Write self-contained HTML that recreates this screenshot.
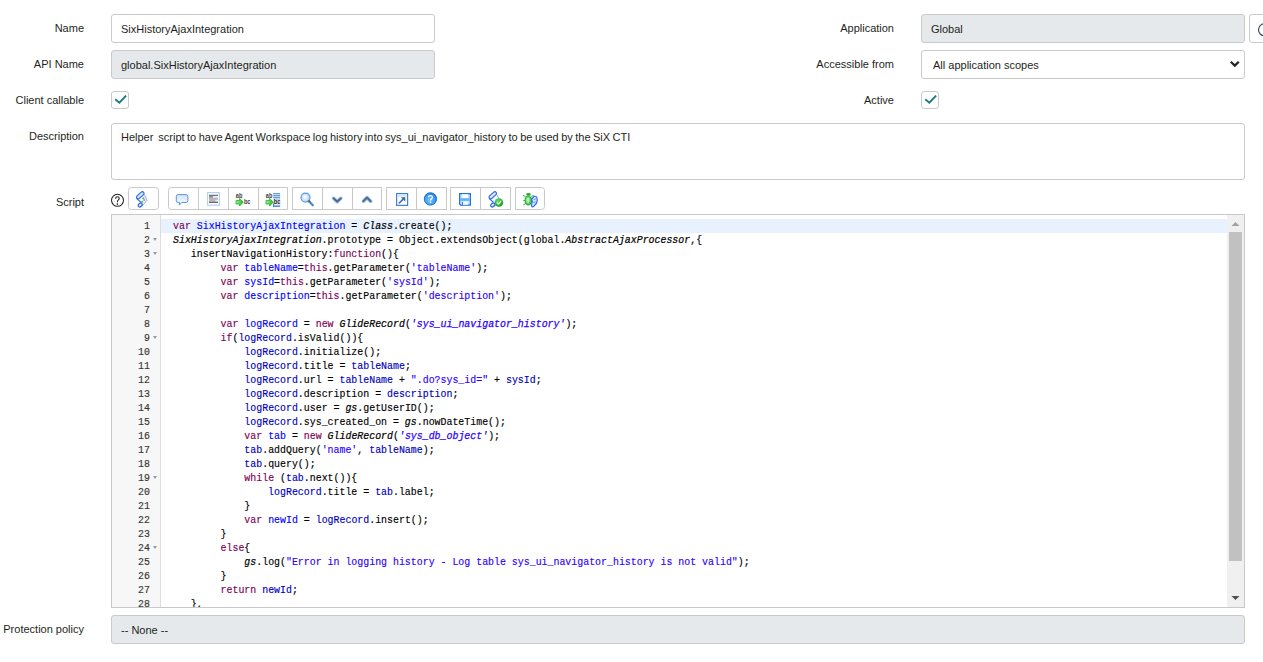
<!DOCTYPE html>
<html><head><meta charset="utf-8">
<style>
*{box-sizing:border-box;margin:0;padding:0}
html,body{width:1263px;height:662px;overflow:hidden;background:#fff}
body{position:relative;font-family:"Liberation Sans",sans-serif;font-size:11px;color:#1d1f21}
.lbl{position:absolute;right:auto;text-align:right;white-space:nowrap;line-height:14px}
.inp{position:absolute;border:1px solid #c9cacb;border-radius:3px;background:#fff;height:29px;padding-left:9px;padding-top:1px;line-height:27px;white-space:nowrap;overflow:hidden}
.ro{background:#e6e9eb}
.cb{position:absolute;width:18px;height:18px;border:1px solid #c9cacb;border-radius:3px;background:#fff}
.cb svg{position:absolute;left:-1px;top:-1px}

.ed{position:absolute;left:111px;top:214px;width:1134px;height:394px;border:1px solid #c9c9c9;overflow:hidden;background:#fff}
.gut{position:absolute;left:0;top:0;width:49px;height:100%;background:#f7f7f7;border-right:1px solid #ddd}
.code{position:absolute;left:0;top:4px;width:100%;font-family:"Liberation Mono",monospace;font-size:10.9px;line-height:14px;white-space:pre;color:#000;-webkit-text-stroke:0.15px currentColor}
.ln{position:relative;height:14px}
.ln .n{position:absolute;left:0;width:38px;text-align:right;color:#333;transform:scaleX(0.9096);transform-origin:right center}
.ln .t{position:absolute;left:61px;transform:scaleX(0.9096);transform-origin:left center}
.ln.hl .bg{position:absolute;left:49px;right:17px;top:0;height:14px;background:#e8f2fe}
.fold{position:absolute;left:41px;top:5px;width:0;height:0;border-left:2.5px solid transparent;border-right:2.5px solid transparent;border-top:3px solid #999}
.k{color:#7f0055}.d{color:#0000ff}.v{color:#0000c0}.s{color:#2a00ff}.g{font-style:italic;-webkit-text-stroke:0.22px currentColor}.si{font-style:italic;-webkit-text-stroke:0.25px currentColor}
.sb{position:absolute;right:0;top:0;width:17px;height:100%;background:#f0f0f0}
</style></head><body>

<div class="lbl" style="left:0;width:84px;top:21px">Name</div>
<div class="inp" style="left:111px;top:14px;width:324px">SixHistoryAjaxIntegration</div>

<div class="lbl" style="left:0;width:84px;top:57px">API Name</div>
<div class="inp ro" style="left:111px;top:50px;width:324px">global.SixHistoryAjaxIntegration</div>

<div class="lbl" style="left:0;width:84px;top:93px">Client callable</div>
<div class="cb" style="left:111px;top:91px"><svg width="18" height="18" viewBox="0 0 18 18"><path d="M4.2 8.3 L8.4 11.7 L15.1 4.6" fill="none" stroke="#1f7d7d" stroke-width="2"/></svg></div>

<div class="lbl" style="left:810px;width:84px;top:21px">Application</div>
<div class="inp ro" style="left:921px;top:14px;width:324px">Global</div>
<div class="inp" style="left:1249px;top:14px;width:30px"></div>
<svg style="position:absolute;left:1250px;top:15px" width="13" height="26"><circle cx="14.5" cy="14.8" r="6" fill="none" stroke="#3a4a5c" stroke-width="1.2"/></svg>

<div class="lbl" style="left:810px;width:84px;top:57px">Accessible from</div>
<div class="inp" style="left:921px;top:50px;width:324px;padding-left:11px">All application scopes</div>
<svg style="position:absolute;left:1225px;top:55px" width="20" height="18"><path d="M5.8 6.7 L9.8 10.6 L13.8 6.7" fill="none" stroke="#222" stroke-width="2.2"/></svg>

<div class="lbl" style="left:810px;width:84px;top:93px">Active</div>
<div class="cb" style="left:921px;top:91px"><svg width="18" height="18" viewBox="0 0 18 18"><path d="M4.2 8.3 L8.4 11.7 L15.1 4.6" fill="none" stroke="#1f7d7d" stroke-width="2"/></svg></div>

<div class="lbl" style="left:0;width:84px;top:129px">Description</div>
<div class="inp" style="left:111px;top:123px;width:1134px;height:57px;line-height:14px;padding-top:6px;word-spacing:-0.6px">Helper&nbsp; script to have Agent Workspace log history into sys_ui_navigator_history to be used by the SiX CTI</div>

<div class="lbl" style="left:0;width:84px;top:195px">Script</div>
<svg style="position:absolute;left:0;top:0" width="560" height="214" viewBox="0 0 560 214">
<defs>
<linearGradient id="gb" x1="0" y1="0" x2="0" y2="1"><stop offset="0" stop-color="#d3e4f8"/><stop offset="1" stop-color="#f7fafe"/></linearGradient>
<radialGradient id="lens" cx="0.45" cy="0.45" r="0.6"><stop offset="0" stop-color="#ffffff"/><stop offset="1" stop-color="#a9cdf5"/></radialGradient>
<radialGradient id="hb" cx="0.45" cy="0.6" r="0.6"><stop offset="0" stop-color="#7cc6fb"/><stop offset="0.7" stop-color="#3b98f0"/><stop offset="1" stop-color="#1466dc"/></radialGradient>
<radialGradient id="gc" cx="0.4" cy="0.35" r="0.7"><stop offset="0" stop-color="#6ee06e"/><stop offset="1" stop-color="#0c9a1c"/></radialGradient>
<radialGradient id="bug" cx="0.45" cy="0.45" r="0.6"><stop offset="0" stop-color="#e8fce8"/><stop offset="0.6" stop-color="#5ad05a"/><stop offset="1" stop-color="#14a828"/></radialGradient>
<linearGradient id="arr" x1="0" y1="0" x2="1" y2="0"><stop offset="0" stop-color="#9af59a"/><stop offset="1" stop-color="#20b820"/></linearGradient>
</defs>
<g fill="#fff" stroke="#c9c9c9" stroke-width="1">
<rect x="128.5" y="187.5" width="30" height="22" rx="3"/>
<path d="M171.5 187.5 H287.5 V209.5 H171.5 A3 3 0 0 1 168.5 206.5 V190.5 A3 3 0 0 1 171.5 187.5 Z"/>
<path d="M198.5 187.5V209.5 M228.5 187.5V209.5 M258.5 187.5V209.5"/>
<rect x="292.5" y="187.5" width="89" height="22"/>
<path d="M322.5 187.5V209.5 M352.5 187.5V209.5"/>
<rect x="386.5" y="187.5" width="60" height="22"/>
<path d="M416.5 187.5V209.5"/>
<rect x="450.5" y="187.5" width="60" height="22"/>
<path d="M480.5 187.5V209.5"/>
<path d="M515.5 187.5 H541.5 A3 3 0 0 1 544.5 190.5 V206.5 A3 3 0 0 1 541.5 209.5 H515.5 Z"/>
</g>
<!-- help circle -->
<circle cx="117.5" cy="200.3" r="6" fill="none" stroke="#262626" stroke-width="1.05"/>
<path d="M115.6 198.7 Q115.6 196.7 117.4 196.7 Q119.2 196.7 119.2 198.3 Q119.2 199.4 118.2 200.1 Q117.4 200.7 117.4 202.2" fill="none" stroke="#262626" stroke-width="1.15"/>
<rect x="116.7" y="203.3" width="1.4" height="1.5" fill="#262626"/>
<!-- script scroll icon -->
<g id="scr">
<path d="M143.5 192.5 L136.5 198.5 L140.8 202.8 L139 205.2 L141.5 207 L147 200.4 L144.6 194.6 Z" fill="#f3f7fe"/>
<path d="M144.6 194.8 L147 200.2 L141.6 206.6" fill="none" stroke="#86aef0" stroke-width="1"/>
<rect x="135.8" y="193.6" width="9" height="3.4" rx="1.7" transform="rotate(-42 140.3 195.3)" fill="#d6e5fb" stroke="#2a62e4" stroke-width="1.1"/>
<path d="M136.6 198.4 L141 202.4" fill="none" stroke="#2a62e4" stroke-width="1.2"/>
<ellipse cx="140.2" cy="205" rx="2.3" ry="1.6" transform="rotate(-40 140.2 205)" fill="#e8f0fd" stroke="#2a62e4" stroke-width="1.2"/>
</g>
<circle cx="143.3" cy="198.3" r="1.1" fill="#55c855"/><circle cx="142.2" cy="201.8" r="1.1" fill="#55c855"/><circle cx="144.2" cy="200" r="1.1" fill="#f07a7a"/>
<!-- comment bubble -->
<path d="M178.2 194.6 H186 Q187.9 194.6 187.9 196.5 V200.6 Q187.9 202.5 186 202.5 H181.8 L179.3 205.2 L179.6 202.5 H178.2 Q176.3 202.5 176.3 200.6 V196.5 Q176.3 194.6 178.2 194.6 Z" fill="url(#gb)" stroke="#5a93d6" stroke-width="1"/>
<!-- format doc -->
<rect x="207.6" y="192.6" width="11.8" height="12.6" fill="#fff" stroke="#b3cbf7" stroke-width="1.1"/>
<rect x="209" y="194.8" width="9" height="8.2" fill="#b4b7ba"/>
<rect x="209" y="194.8" width="9" height="1.3" fill="#707378"/>
<rect x="209" y="196.1" width="4" height="1.4" fill="#8a8d91"/>
<rect x="213" y="196.1" width="5" height="1.5" fill="#f4f9fd"/>
<rect x="209" y="201.7" width="9" height="1.3" fill="#6c6f73"/>
<rect x="215.3" y="199.8" width="2.7" height="1.6" fill="#e9edf0"/>
<!-- replace -->
<g font-family="Liberation Sans" font-size="7.6" font-weight="bold" fill="#3c3c3c">
<text transform="translate(235.8 197.9) scale(0.74 1)">ab</text><text transform="translate(243.9 204.3) scale(0.74 1)">bc</text>
<text transform="translate(265.8 197.9) scale(0.74 1)">ab</text>
</g>
<path d="M236 200.4 H239.6 V198.4 L243.2 202.2 L239.6 206 V204 H236 Z" fill="url(#arr)" stroke="#14a014" stroke-width="0.7" stroke-linejoin="round"/>
<rect x="273.3" y="193" width="6.8" height="7" fill="#bcd6f2"/>
<g fill="#6a9ed8"><rect x="273.3" y="193" width="6.8" height="1"/><rect x="273.3" y="195" width="6.8" height="1"/><rect x="273.3" y="197" width="6.8" height="1"/></g>
<rect x="273.3" y="200" width="6.8" height="5.4" fill="#e3e8ee"/>
<text transform="translate(273.7 204.4) scale(0.74 1)" font-family="Liberation Sans" font-size="7.6" font-weight="bold" fill="#2a2a2a">bc</text>
<rect x="273" y="205.5" width="7.2" height="1.3" fill="#2c78ea"/>
<rect x="273" y="203.5" width="1" height="3" fill="#2c78ea"/>
<path d="M266 200.4 H269.6 V198.4 L273.2 202.2 L269.6 206 V204 H266 Z" fill="url(#arr)" stroke="#14a014" stroke-width="0.7" stroke-linejoin="round"/>
<!-- magnifier -->
<circle cx="305.5" cy="197.6" r="4.5" fill="url(#lens)" stroke="#5c9be0" stroke-width="1.2"/>
<path d="M308.8 201 L312.8 205.2" stroke="#4f86cc" stroke-width="2.3" stroke-linecap="round"/>
<path d="M308.6 200.8 L309.9 202.1" stroke="#6a6a6a" stroke-width="2.3"/>
<!-- chevrons -->
<path d="M333.6 198.3 L337.2 201.7 L340.8 198.3" fill="none" stroke="#8ab8f0" stroke-width="3.6" stroke-linecap="round" stroke-linejoin="round"/>
<path d="M333.6 198.3 L337.2 201.7 L340.8 198.3" fill="none" stroke="#56667c" stroke-width="1.7" stroke-linecap="round" stroke-linejoin="round"/>
<path d="M363.4 201.2 L367 197.6 L370.6 201.2" fill="none" stroke="#8ab8f0" stroke-width="3.6" stroke-linecap="round" stroke-linejoin="round"/>
<path d="M363.4 201.2 L367 197.6 L370.6 201.2" fill="none" stroke="#56667c" stroke-width="1.7" stroke-linecap="round" stroke-linejoin="round"/>
<!-- fullscreen -->
<rect x="396.6" y="193.6" width="11" height="11.8" fill="#fff" stroke="#3f7ee4" stroke-width="1.2"/>
<rect x="397.2" y="194.2" width="9.8" height="2.4" fill="#cfe6fb"/>
<path d="M399.3 203 L404.2 198.1" stroke="#3d6cb0" stroke-width="1.6" stroke-linecap="round"/>
<path d="M400.8 197.2 H405.3 V201.7 Z" fill="#3d6cb0"/>
<!-- blue help -->
<circle cx="430.4" cy="198.9" r="6.5" fill="url(#hb)"/>
<circle cx="430.4" cy="198.9" r="6.1" fill="none" stroke="#1b6fe0" stroke-width="0.8"/>
<path d="M428.5 197.3 Q428.5 195.7 430.5 195.7 Q432.4 195.7 432.4 197.2 Q432.4 198.3 431.3 198.9 Q430.5 199.4 430.5 200.6" fill="none" stroke="#fff" stroke-width="1.3"/>
<rect x="429.8" y="201.6" width="1.4" height="1.4" fill="#fff"/>
<!-- floppy -->
<path d="M459.6 193.6 H470.4 V205.2 H460.8 L459.6 204 Z" fill="#bfe3fb" stroke="#2a6ee8" stroke-width="1.2"/>
<rect x="462.2" y="194.3" width="5.8" height="4" fill="#ffffff"/>
<rect x="460.3" y="198.3" width="9.4" height="2.6" fill="#5ab6f4"/>
<rect x="462.8" y="201.3" width="5.2" height="3.5" fill="#eef6fd"/>
<rect x="462" y="202" width="0.9" height="2.8" fill="#5860c8"/>
<!-- syntax check -->
<use href="#scr" transform="translate(352.5 0)"/>
<circle cx="498.9" cy="202.5" r="4.3" fill="url(#gc)"/>
<path d="M496.8 202.4 L498.4 204.1 L501.2 200.8" fill="none" stroke="#e8ffe8" stroke-width="1.2"/>
<!-- debug bug -->
<path d="M523 195.5 L525.5 196.5 M523.3 200.5 H525.2 M523.3 204.8 L525.5 203.8 M533.8 195.5 L531.3 196.5" stroke="#30b840" stroke-width="1"/>
<ellipse cx="528.3" cy="200.5" rx="3.3" ry="4.6" fill="url(#bug)" stroke="#18a82a" stroke-width="0.8"/>
<ellipse cx="528.5" cy="194.4" rx="2.3" ry="1.4" fill="#22aa33"/>
<rect x="527.6" y="197.3" width="0.9" height="6" fill="#c8f6c8"/>
<path d="M534.2 196.3 Q536.4 196 537 197.8 L537.2 201 L536.3 203.5 L533.2 206.8 Q531.3 207.2 531.5 205 L532.3 201.5 L531.6 199 Z" fill="#d5e3fb" stroke="#2a66e6" stroke-width="1.1" stroke-linejoin="round"/>
<path d="M533.5 199.5 L536 198.8 M533 202.5 L535.8 201.8" stroke="#5a8ef0" stroke-width="0.8"/>
</svg>


<div class="ed"><div class="gut"></div><div class="code"><div class="ln hl"><span class="bg"></span><span class="n">1</span><span class="t"><span class="k">var</span> <span class="d">SixHistoryAjaxIntegration</span> = <span class="g">Class</span>.create();</span></div><div class="ln"><span class="n">2</span><span class="fold"></span><span class="t"><span class="g">SixHistoryAjaxIntegration</span>.prototype = Object.extendsObject(global.<span class="g">AbstractAjaxProcessor</span>,{</span></div><div class="ln"><span class="n">3</span><span class="fold"></span><span class="t">   insertNavigationHistory:<span class="k">function</span>(){</span></div><div class="ln"><span class="n">4</span><span class="t">        <span class="k">var</span> <span class="d">tableName</span>=<span class="k">this</span>.getParameter(<span class="s">'tableName'</span>);</span></div><div class="ln"><span class="n">5</span><span class="t">        <span class="k">var</span> <span class="d">sysId</span>=<span class="k">this</span>.getParameter(<span class="s">'sysId'</span>);</span></div><div class="ln"><span class="n">6</span><span class="t">        <span class="k">var</span> <span class="d">description</span>=<span class="k">this</span>.getParameter(<span class="s">'description'</span>);</span></div><div class="ln"><span class="n">7</span><span class="t"></span></div><div class="ln"><span class="n">8</span><span class="t">        <span class="k">var</span> <span class="d">logRecord</span> = <span class="k">new</span> <span class="g">GlideRecord</span>(<span class="s si">'sys_ui_navigator_history'</span>);</span></div><div class="ln"><span class="n">9</span><span class="fold"></span><span class="t">        <span class="k">if</span>(<span class="v">logRecord</span>.isValid()){</span></div><div class="ln"><span class="n">10</span><span class="t">            <span class="v">logRecord</span>.initialize();</span></div><div class="ln"><span class="n">11</span><span class="t">            <span class="v">logRecord</span>.title = <span class="v">tableName</span>;</span></div><div class="ln"><span class="n">12</span><span class="t">            <span class="v">logRecord</span>.url = <span class="v">tableName</span> + <span class="s">".do?sys_id="</span> + <span class="v">sysId</span>;</span></div><div class="ln"><span class="n">13</span><span class="t">            <span class="v">logRecord</span>.description = <span class="v">description</span>;</span></div><div class="ln"><span class="n">14</span><span class="t">            <span class="v">logRecord</span>.user = <span class="g">gs</span>.getUserID();</span></div><div class="ln"><span class="n">15</span><span class="t">            <span class="v">logRecord</span>.sys_created_on = <span class="g">gs</span>.nowDateTime();</span></div><div class="ln"><span class="n">16</span><span class="t">            <span class="k">var</span> <span class="d">tab</span> = <span class="k">new</span> <span class="g">GlideRecord</span>(<span class="s si">'sys_db_object'</span>);</span></div><div class="ln"><span class="n">17</span><span class="t">            <span class="v">tab</span>.addQuery(<span class="s">'name'</span>, <span class="v">tableName</span>);</span></div><div class="ln"><span class="n">18</span><span class="t">            <span class="v">tab</span>.query();</span></div><div class="ln"><span class="n">19</span><span class="fold"></span><span class="t">            <span class="k">while</span> (<span class="v">tab</span>.next()){</span></div><div class="ln"><span class="n">20</span><span class="t">                <span class="v">logRecord</span>.title = <span class="v">tab</span>.label;</span></div><div class="ln"><span class="n">21</span><span class="t">            }</span></div><div class="ln"><span class="n">22</span><span class="t">            <span class="k">var</span> <span class="d">newId</span> = <span class="v">logRecord</span>.insert();</span></div><div class="ln"><span class="n">23</span><span class="t">        }</span></div><div class="ln"><span class="n">24</span><span class="fold"></span><span class="t">        <span class="k">else</span>{</span></div><div class="ln"><span class="n">25</span><span class="t">            <span class="g">gs</span>.log(<span class="s">"Error in logging history - Log table sys_ui_navigator_history is not valid"</span>);</span></div><div class="ln"><span class="n">26</span><span class="t">        }</span></div><div class="ln"><span class="n">27</span><span class="t">        <span class="k">return</span> <span class="v">newId</span>;</span></div><div class="ln"><span class="n">28</span><span class="t">   },</span></div></div><div class="sb"><svg width="17" height="392" style="position:absolute;left:0;top:0"><path d="M4.5 11 L8.5 7 L12.5 11 Z" fill="#a3a3a3"/><rect x="2" y="17" width="13" height="329" fill="#c1c1c1"/><path d="M4.5 381 L12.5 381 L8.5 385 Z" fill="#505050"/></svg></div></div>

<div class="lbl" style="left:0;width:84px;top:622px">Protection policy</div>
<div class="inp ro" style="left:111px;top:615px;width:1134px">-- None --</div>

</body></html>
